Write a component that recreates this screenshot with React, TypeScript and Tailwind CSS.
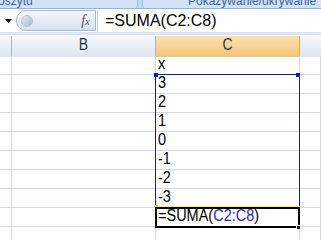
import React from 'react';

const values = ['x', '3', '2', '1', '0', '-1', '-2', '-3'];

function Cell({ children, className = '' }: { children?: React.ReactNode; className?: string }) {
  return (
    <div className={`h-[19px] border-r border-b border-[#d0d7e5] flex items-end px-[2px] pb-[3px] text-[14.5px] leading-none text-black ${className}`}>
      {children}
    </div>
  );
}

function Tall({ children }: { children: React.ReactNode }) {
  return <span className="inline-block origin-bottom scale-y-[1.2]">{children}</span>;
}

export default function App() {
  return (
    <div className="relative w-[321px] h-[240px] overflow-hidden bg-white font-['Liberation_Sans',Arial,sans-serif]">
      {/* ribbon bottom */}
      <div className="flex h-[9px] bg-[#c4d8f0] border-b border-[#8db2e3] overflow-hidden">
        <div className="w-[138px] shrink-0 border-r border-[#9ebbe0] bg-[#d3e2f4] rounded-br-[3px] flex overflow-hidden">
          <span className="shrink-0 whitespace-nowrap text-[12px] leading-none -mt-[5px] -ml-[64px] text-[#3b63a0]">Widoki skoroszytu</span>
        </div>
        <div className="ml-[4px] w-[200px] shrink-0 border-l border-[#9ebbe0] bg-[#d3e2f4] rounded-bl-[3px] flex pl-[45px] overflow-hidden">
          <span className="shrink-0 whitespace-nowrap text-[12px] leading-none -mt-[5px] text-[#3b63a0]">Pokazywanie/ukrywanie</span>
        </div>
      </div>

      {/* formula bar */}
      <div className="flex h-[26px] items-center bg-white border-b-[3px] border-[#dbe4f1]">
        <div className="w-[16px] flex justify-center">
          <svg width="7" height="4" viewBox="0 0 7 4"><path d="M0 0h7L3.5 4z" fill="#000" /></svg>
        </div>
        <div className="relative w-[80px] h-[21px] rounded-l-[10px] border border-[#a4bad6] bg-gradient-to-b from-[#f4f7fb] to-[#d7e1ee] flex items-center justify-end pr-[5px]">
          <span className="absolute left-[4px] top-[4px] w-[12px] h-[12px] rounded-full bg-gradient-to-br from-[#e9eef5] to-[#a8b6c8] border border-[#b8c6d8]" />
          <span className="font-['Liberation_Serif',serif] italic text-[14px] text-[#555]">f<span className="text-[11px]">x</span></span>
        </div>
        <div className="h-full w-px bg-[#c5cfdc] ml-[1px]" />
        <div className="pl-[7px] text-[16px] leading-none text-black pt-[1px]">=SUMA(C2:C8)</div>
      </div>

      {/* column headers */}
      <div className="grid grid-cols-[12px_144px_144px_1fr] h-[20px] mt-[1px] border-b border-[#9eb6ce]">
        <div className="border-r border-[#9eb6ce] bg-gradient-to-b from-[#f5f8fc] to-[#dde5f0]" />
        <div className="border-r border-[#9eb6ce] bg-gradient-to-b from-[#f5f8fc] to-[#dde5f0] flex items-center justify-center text-[14px] text-[#27354a]"><Tall>B</Tall></div>
        <div className="border-r border-[#e2a64c] bg-gradient-to-b from-[#fae0b2] to-[#f3c577] flex items-center justify-center text-[14px] text-[#27354a]"><Tall>C</Tall></div>
        <div className="bg-gradient-to-b from-[#f5f8fc] to-[#dde5f0]" />
      </div>

      {/* grid */}
      <div className="grid grid-cols-[12px_144px_144px_1fr]">
        {values.map((v, i) => (
          <React.Fragment key={i}>
            <Cell />
            <Cell />
            <Cell><Tall>{v}</Tall></Cell>
            <Cell />
          </React.Fragment>
        ))}
        <Cell />
        <Cell />
        <Cell>
          <Tall>=SUMA(<span className="text-[#2a2ab8]">C2:C8</span>)</Tall>
        </Cell>
        <Cell />
        <Cell />
        <Cell />
        <Cell />
        <Cell />
      </div>

      {/* range C2:C8 */}
      <div className="absolute left-[155px] top-[74px] w-[145px] h-[134px] border border-[#1c1c8a]" />
      <div className="absolute left-[154px] top-[73px] w-[4px] h-[4px] bg-[#1414d6]" />
      <div className="absolute left-[296px] top-[73px] w-[4px] h-[4px] bg-[#1414d6]" />
      <div className="absolute left-[155px] top-[206px] w-[145px] h-px bg-[#f2f27a]" />
      <div className="absolute left-[154px] top-[205px] w-[4px] h-[3px] bg-[#d8d840]" />
      {/* active cell C9 */}
      <div className="absolute left-[155px] top-[207px] w-[145px] h-[21px] border-2 border-black" />
      <div className="absolute left-[296px] top-[225px] w-[5px] h-[5px] bg-black border border-white" />
    </div>
  );
}
